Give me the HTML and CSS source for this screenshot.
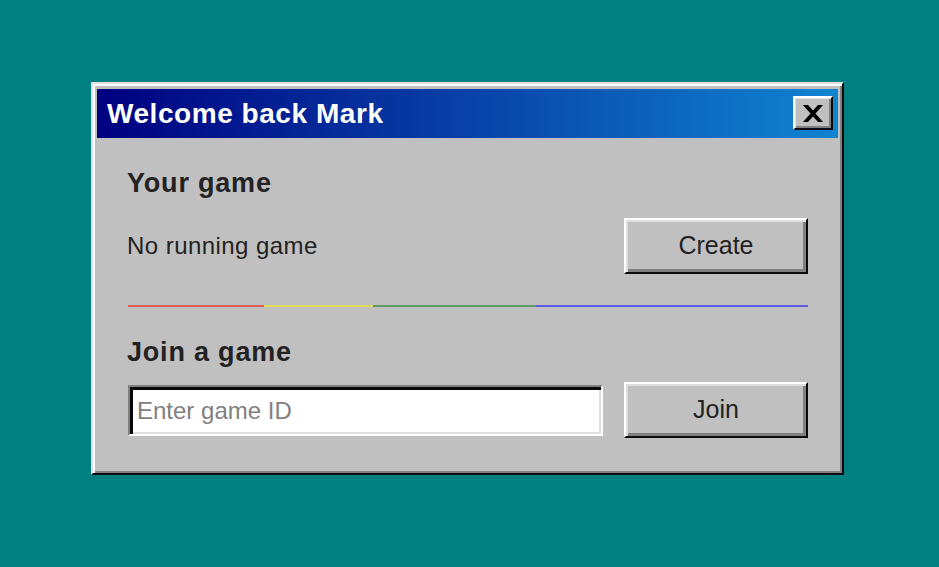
FILE: index.html
```html
<!DOCTYPE html>
<html>
<head>
<meta charset="utf-8">
<link rel="stylesheet" href="styles.css">
</head>
<body>
<div class="window">
  <div class="titlebar">
    <span class="title">Welcome back Mark</span>
    <button class="close" aria-label="Close">
      <svg width="20" height="17" viewBox="0 0 20 17">
        <path d="M0 0h5l5 5.5L15 0h5l-7.5 8.5L20 17h-5l-5-5.5L5 17H0l7.5-8.5z" fill="#000"/>
      </svg>
    </button>
  </div>
  <div class="content">
    <h2 class="heading first">Your game</h2>
    <div class="row">
      <span class="status">No running game</span>
      <button class="btn">Create</button>
    </div>
    <div class="divider">
      <span class="seg red"></span>
      <span class="seg yellow"></span>
      <span class="seg green"></span>
      <span class="seg blue"></span>
    </div>
    <h2 class="heading second">Join a game</h2>
    <div class="row">
      <input class="field" type="text" placeholder="Enter game ID">
      <button class="btn">Join</button>
    </div>
  </div>
</div>
</body>
</html>
```

FILE: styles.css
```css
html, body {
  margin: 0;
  padding: 0;
}
body {
  background: #008080;
  width: 939px;
  height: 567px;
  overflow: hidden;
  padding: 82px 0 0 91px;
  box-sizing: border-box;
  font-family: "Liberation Sans", Arial, sans-serif;
}
.window {
  width: 753px;
  height: 393px;
  box-sizing: border-box;
  background: #c0c0c0;
  border: 2px solid;
  border-color: #dfdfdf #0a0a0a #0a0a0a #dfdfdf;
  box-shadow: inset 2px 2px 0 #ffffff, inset -2px -2px 0 #808080;
  padding: 5px 4px 2px 4px;
  display: flex;
  flex-direction: column;
}
.titlebar {
  height: 49px;
  background: linear-gradient(90deg, #000080 0%, #1084d0 100%);
  display: flex;
  align-items: center;
  justify-content: space-between;
  padding: 0 5px 0 10px;
  box-sizing: border-box;
}
.title {
  color: #ffffff;
  font-weight: bold;
  font-size: 28px;
  letter-spacing: 0.55px;
}
.close {
  width: 40px;
  height: 34px;
  margin-top: -1px;
  padding: 0;
  background: #c0c0c0;
  border: 2px solid;
  border-color: #ffffff #0a0a0a #0a0a0a #ffffff;
  box-shadow: inset 1px 1px 0 #dfdfdf, inset -2px -2px 0 #808080;
  display: flex;
  align-items: center;
  justify-content: center;
  box-sizing: border-box;
}
.content {
  padding: 29px 30px 0 31px;
  display: flex;
  flex-direction: column;
}
.heading {
  margin: 0;
  font-size: 27px;
  font-weight: bold;
  color: #222222;
  height: 32px;
  line-height: 32px;
  letter-spacing: 0.8px;
}
.heading.first {
  margin-bottom: 19px;
  margin-left: -1px;
}
.heading.second {
  margin-top: 29px;
  margin-bottom: 14px;
  margin-left: -1px;
}
.row {
  height: 56px;
  display: flex;
  align-items: center;
  justify-content: space-between;
}
.status {
  font-size: 24px;
  color: #222222;
  letter-spacing: 0.45px;
  margin-left: -1px;
}
.btn {
  width: 184px;
  height: 56px;
  box-sizing: border-box;
  background: #c0c0c0;
  border: 2px solid;
  border-color: #ffffff #0a0a0a #0a0a0a #ffffff;
  box-shadow: inset 2px 2px 0 #dfdfdf, inset -3px -3px 0 #808080;
  font-family: "Liberation Sans", Arial, sans-serif;
  font-size: 25px;
  color: #222222;
  padding: 0 0 2px 0;
}
.divider {
  margin-top: 31px;
  height: 2px;
  display: flex;
}
.seg { height: 2px; display: block; }
.red { width: 136px; background: #dd5c5c; }
.yellow { width: 109px; background: #dcdc5a; }
.green { width: 163px; background: #5b9c66; }
.blue { width: 272px; background: #5c5ce4; }
.field {
  width: 475px;
  height: 51px;
  box-sizing: border-box;
  background: #ffffff;
  border: 2px solid;
  border-color: #808080 #ffffff #ffffff #808080;
  box-shadow: inset 3px 3px 0 #0a0a0a, inset -2px -2px 0 #dfdfdf;
  padding: 0 0 0 7px;
  font-family: "Liberation Sans", Arial, sans-serif;
  font-size: 24px;
  color: #222222;
  outline: none;
  margin-top: 1px;
}
.field::placeholder {
  color: #808080;
  opacity: 1;
}
```
